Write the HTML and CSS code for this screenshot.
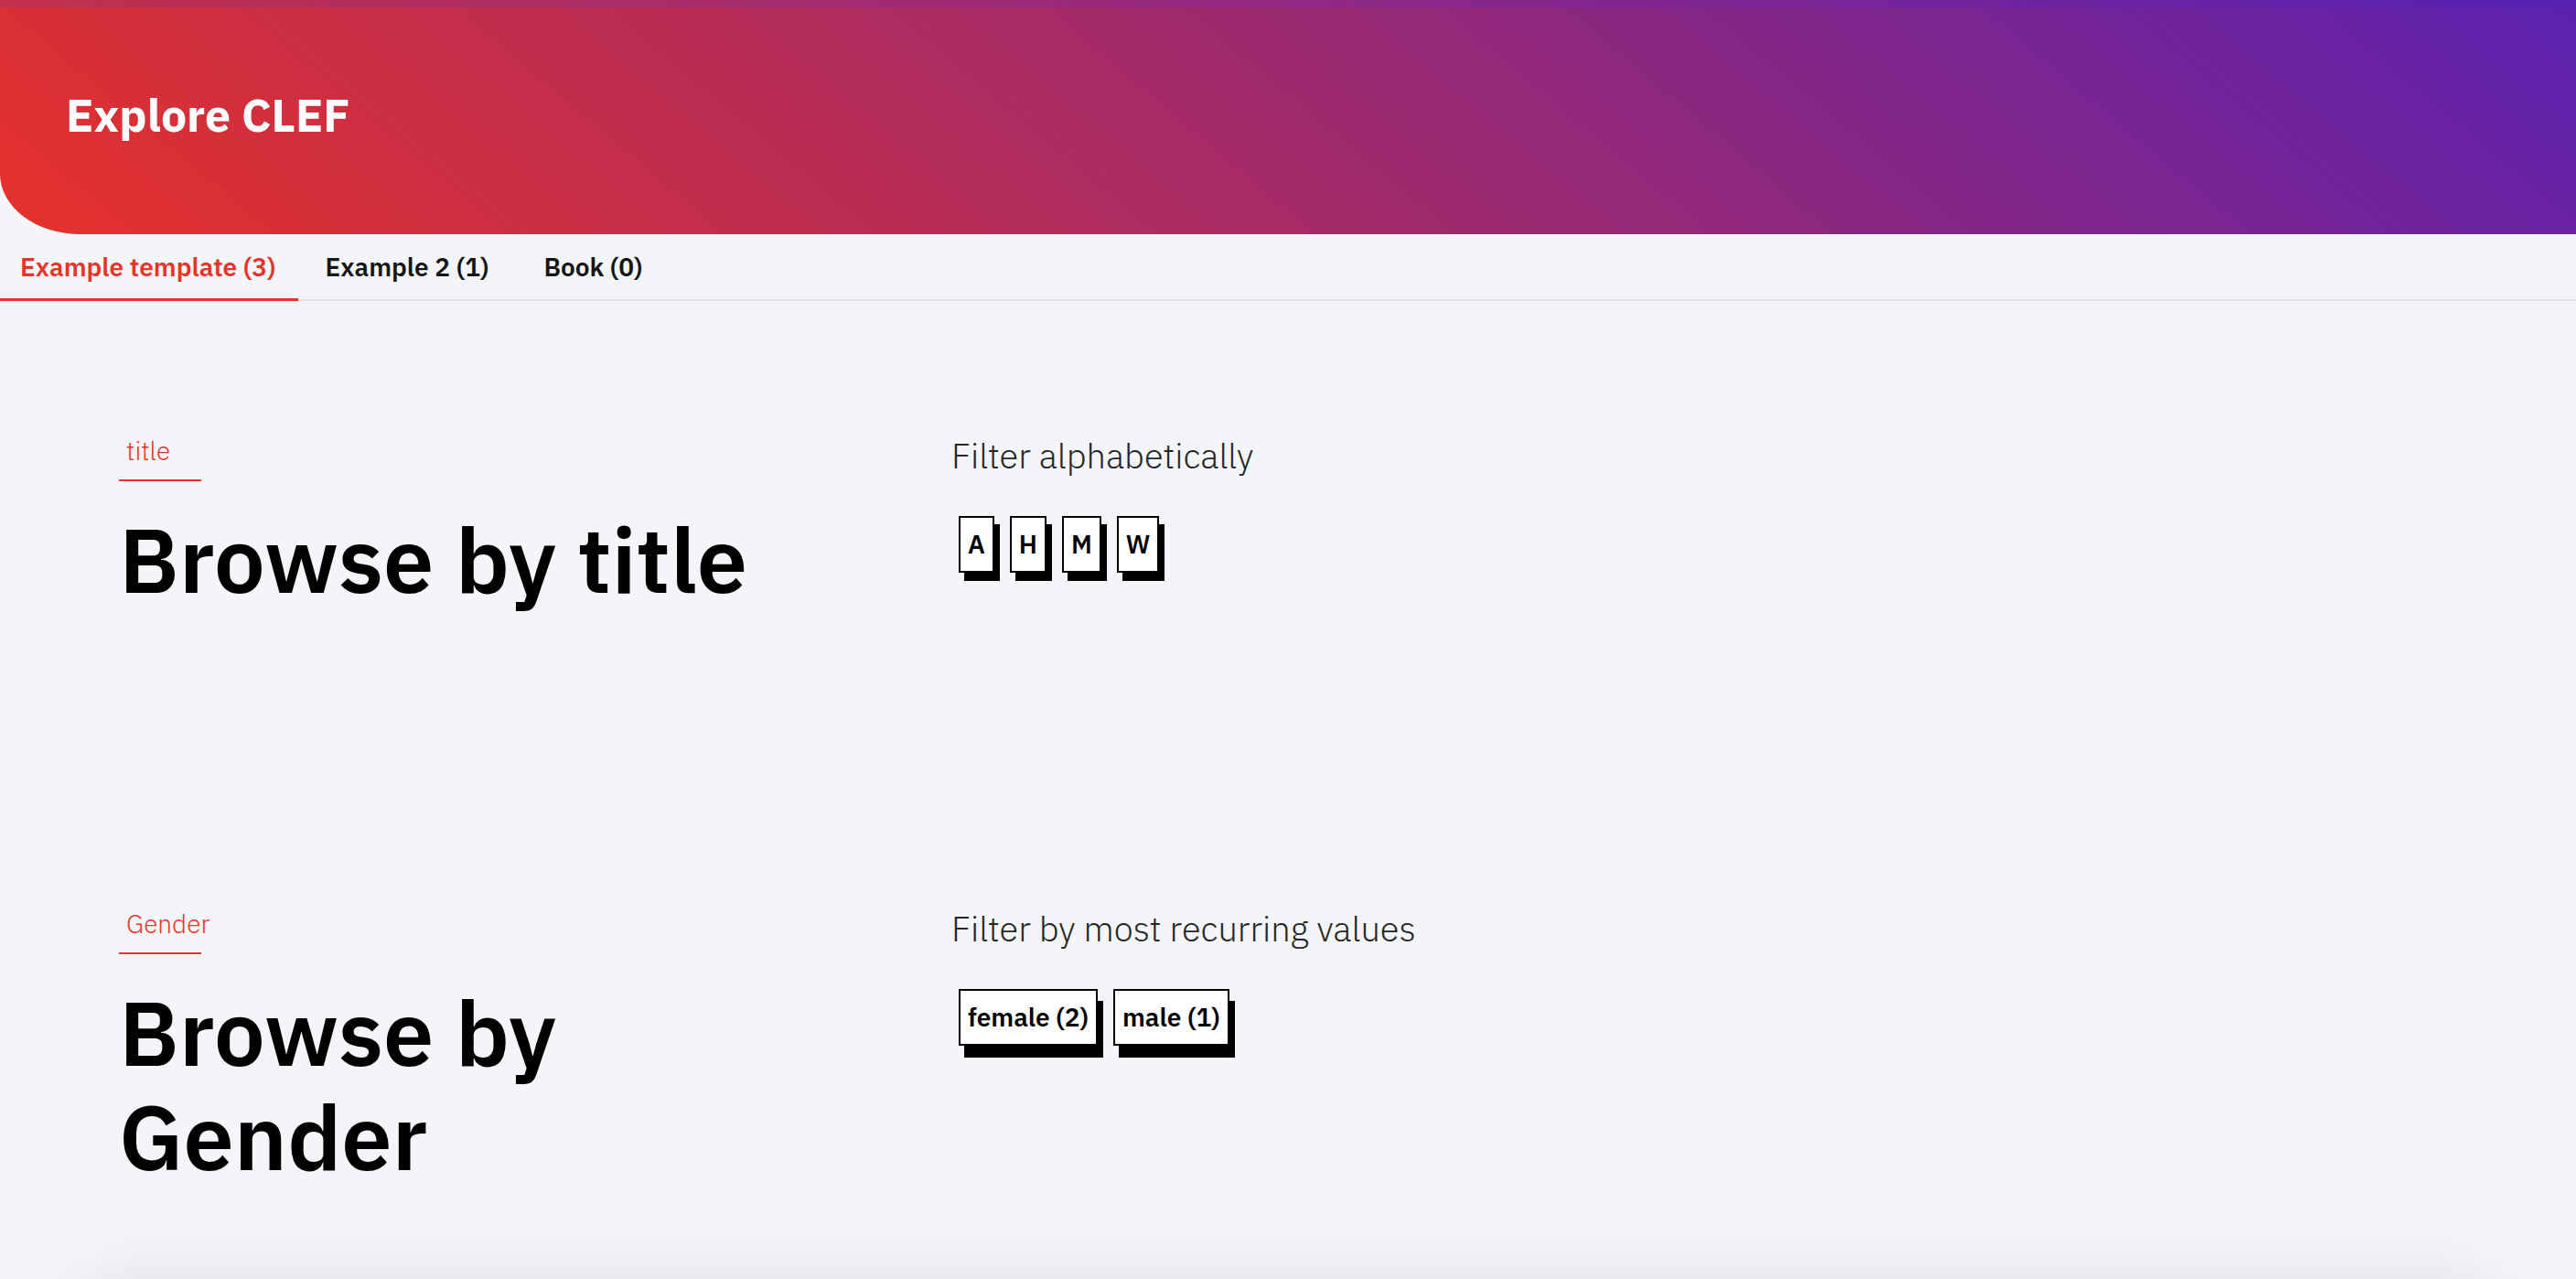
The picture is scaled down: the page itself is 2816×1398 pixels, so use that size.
FILE: index.html
```html
<!DOCTYPE html>
<html lang="en">
<head>
<meta charset="utf-8">
<title>Explore CLEF</title>
<link rel="stylesheet" href="styles.css">
</head>
<body>
<header class="hero">
  <div class="hero-strip"></div>
  <div class="hero-body">
    <h1 class="hero-title">Explore CLEF</h1>
  </div>
</header>
<nav class="tabs">
  <a class="tab tab-active">Example template (3)</a>
  <a class="tab">Example 2 (1)</a>
  <a class="tab">Book (0)</a>
</nav>
<main class="content">
  <section class="browse">
    <div class="browse-left">
      <div class="browse-label">title</div>
      <h2 class="browse-heading">Browse by title</h2>
    </div>
    <div class="browse-right">
      <p class="filter-caption">Filter alphabetically</p>
      <div class="chips">
        <button class="chip chip-letter">A</button>
        <button class="chip chip-letter">H</button>
        <button class="chip chip-letter">M</button>
        <button class="chip chip-letter">W</button>
      </div>
    </div>
  </section>
  <section class="browse">
    <div class="browse-left">
      <div class="browse-label">Gender</div>
      <h2 class="browse-heading">Browse by<br>Gender</h2>
    </div>
    <div class="browse-right">
      <p class="filter-caption">Filter by most recurring values</p>
      <div class="chips">
        <button class="chip chip-value">female (2)</button>
        <button class="chip chip-value">male (1)</button>
      </div>
    </div>
  </section>
</main>
<div class="below-card"></div>
</body>
</html>
```

FILE: styles.css
```css
* {
  box-sizing: border-box;
}

html, body {
  margin: 0;
  padding: 0;
}

body {
  background: #f4f5f8;
  font-family: "IBM Plex Sans", Roboto, "Liberation Sans", sans-serif;
  color: #000;
}

.hero {
  height: 256px;
  display: flex;
  flex-direction: column;
  background: linear-gradient(40deg, #e6312a 0%, #a02a6c 50%, #5b21b0 100%);
  border-bottom-left-radius: 88px 66px;
  overflow: hidden;
}

.hero-strip {
  height: 8px;
  flex: none;
  background: linear-gradient(90deg, #c2304b 0%, #96297f 46%, #5b21b0 95%);
}

.hero-body {
  flex: 1;
  display: flex;
  align-items: center;
  padding: 0 0 12px 72px;
}

.hero-title {
  margin: 0;
  font-size: 50px;
  line-height: 60px;
  font-weight: 700;
  color: #fff;
}

.tabs {
  display: flex;
  height: 73px;
  box-shadow: inset 0 -2px 0 #e0e1e5;
}

.tab {
  display: flex;
  align-items: center;
  padding: 0 30px;
  font-size: 28px;
  font-weight: 600;
  color: #161616;
  border-bottom: 3px solid transparent;
  white-space: nowrap;
}

.tab-active {
  padding: 0 24px 0 22px;
  color: #e5352b;
  border-bottom-color: #e5352b;
}

.content {
  display: flex;
  flex-direction: column;
  gap: 324px;
  padding: 146px 0 0 130px;
}

.browse {
  display: grid;
  grid-template-columns: 910px 1fr;
  align-items: start;
}

.browse-label {
  width: 90px;
  padding: 0 0 13px 8px;
  border-bottom: 2px solid #e5352b;
  font-size: 28px;
  line-height: 36px;
  font-weight: 300;
  color: #e5352b;
  white-space: nowrap;
}

.browse-heading {
  margin: 28px 0 0;
  font-size: 99px;
  line-height: 114px;
  font-weight: 600;
  color: #000;
}

.browse-right {
  padding-top: 0;
}

.filter-caption {
  margin: 0;
  font-size: 38px;
  line-height: 46px;
  font-weight: 300;
  color: #262626;
}

.chips {
  display: flex;
  gap: 17px;
  margin-top: 43px;
  padding-left: 8px;
}

.chip {
  height: 62px;
  padding: 0 8px;
  border: 2px solid #000;
  border-radius: 0;
  background: #fff;
  font-family: inherit;
  font-size: 28px;
  line-height: 58px;
  font-weight: 600;
  color: #000;
}

.chip-letter {
  box-shadow: 6px 9px 0 #000;
}

.chip-value {
  box-shadow: 6px 13px 0 #000;
}

.below-card {
  height: 300px;
  margin: 105px 96px 0;
  background: #f4f5f8;
  box-shadow: 0 0 80px rgba(0, 0, 0, 0.1);
}
```
